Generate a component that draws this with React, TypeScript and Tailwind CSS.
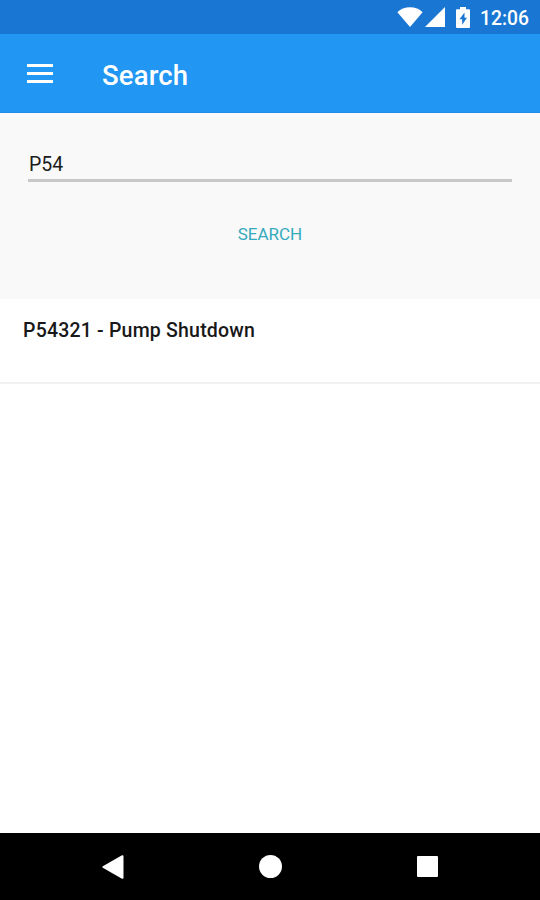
import React from "react";

function StatusBar() {
  return (
    <div className="flex h-[34px] shrink-0 items-center justify-end bg-[#1976d2] pr-[11px] text-white">
      <svg className="mr-[2px] h-[20px] w-[26px]" viewBox="0 0 26 20" fill="currentColor">
        <path d="M0.4 5.2C3.5 2 8 0.2 13 0.2S22.500 2 25.600 5.200L13 20Z" />
      </svg>
      <svg className="mr-[11px] h-[20px] w-[20px]" viewBox="0 0 20 20" fill="currentColor">
        <path d="M20 0V20H0Z" />
      </svg>
      <svg className="mr-[10px] h-[21px] w-[14px]" viewBox="0 0 14 21" fill="currentColor">
        <path
          fillRule="evenodd"
          d="M4 0H10V2.200H13Q14 2.200 14 3.200V20Q14 21 13 21H1Q0 21 0 20V3.200Q0 2.200 1 2.200H4ZM8.500 5.500L3.500 12.300H6.200V17.800L11 10.800H8.500Z"
        />
      </svg>
      <span className="mt-[3px] w-[49px] text-[19.3px] leading-[22px] font-medium">12:06</span>
    </div>
  );
}

function AppBar() {
  return (
    <header className="flex h-[79px] shrink-0 items-center border-b border-[#1f8ce8] bg-[#2196f3] pl-[27px] text-white">
      <button aria-label="Menu" className="mt-[1px] flex w-[26px] flex-col gap-[5px]">
        <span className="h-[3px] bg-white" />
        <span className="h-[3px] bg-white" />
        <span className="h-[3px] bg-white" />
      </button>
      <h1 className="mt-[6px] ml-[49px] text-[27.5px] leading-[32px] font-medium tracking-[0.15px]">Search</h1>
    </header>
  );
}

function SearchForm() {
  return (
    <section className="flex h-[186px] shrink-0 flex-col bg-[#f9f9f9] px-[28px] pt-[40px]">
      <div className="h-[29px] border-b-[3px] border-[#c8c8c8] pl-[1px] text-[19.5px] leading-[24px] text-[#1c1c1c]">
        P54
      </div>
      <button className="mt-[42px] self-center text-[17px] leading-[20px] text-[#35a9bd]">SEARCH</button>
    </section>
  );
}

function NavigationBar() {
  return (
    <nav className="flex h-[67px] shrink-0 items-center justify-between bg-black px-[102px] text-white">
      <svg className="h-[24px] w-[22px]" viewBox="0 0 22 24" fill="currentColor">
        <path d="M0.800 11.200L20 0.300Q21.500 -0.200 21.500 1.500V22.500Q21.500 24.200 20 23.700L0.800 12.800Q-0.200 12 0.800 11.200Z" />
      </svg>
      <span className="mr-[1px] h-[23px] w-[23px] rounded-full bg-white" />
      <span className="h-[21px] w-[21px] rounded-[1px] bg-white" />
    </nav>
  );
}

export default function App() {
  return (
    <div className="flex h-[900px] w-[540px] flex-col overflow-hidden bg-white font-['Roboto',sans-serif]">
      <StatusBar />
      <AppBar />
      <SearchForm />
      <main className="flex-1">
        <div className="h-[85px] border-b-2 border-[#f1f1f1] pt-[20px] pl-[23px] text-[19.5px] leading-[24px] font-medium tracking-[0.2px] text-[#181818]">
          P54321 - Pump Shutdown
        </div>
      </main>
      <NavigationBar />
    </div>
  );
}
